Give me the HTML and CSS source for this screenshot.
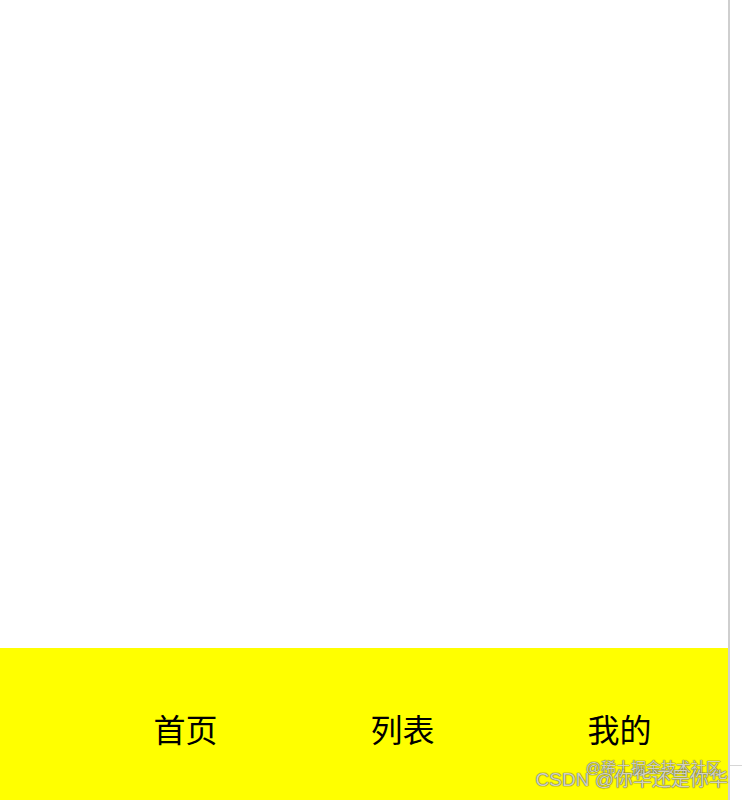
FILE: index.html
```html
<!DOCTYPE html>
<html lang="zh-CN">
<head>
    <meta charset="UTF-8">
    <meta name="viewport" content="width=device-width, initial-scale=1.0">
    <title>TabBar</title>
    <link rel="stylesheet" href="styles.css">
</head>
<body>

    <div class="screen">
        <div class="phone">
            <div class="content"></div>
            <div class="tabbar">
                <div class="tab">首页</div>
                <div class="tab">列表</div>
                <div class="tab">我的</div>
            </div>
        </div>
        <div class="side">
            <div class="side-line"></div>
        </div>

        <div class="watermark">
            <span class="mark-top">@稀土掘金技术社区</span>
            <span class="mark-bottom">CSDN @你华还是你华</span>
        </div>
    </div>

</body>
</html>
```

FILE: styles.css
```css
html, body {
    margin: 0;
    padding: 0;
    background-color: #fff;
}
body {
    font-family: "Noto Sans CJK SC", "Noto Sans", sans-serif;
}
.screen {
    position: relative;
    display: flex;
    width: 742px;
    height: 800px;
    overflow: hidden;
}
.phone {
    display: flex;
    flex-direction: column;
    width: 728px;
    height: 800px;
    border-right: 2px solid #cfcfcf;
}
.content {
    height: 648px;
    background-color: #fff;
}
.tabbar {
    flex: 1;
    display: flex;
    justify-content: flex-end;
    background-color: #ffff00;
    padding-top: 64px;
    box-sizing: border-box;
}
.tab {
    width: 217px;
    text-align: center;
    font-size: 32px;
    line-height: 32px;
    color: #000;
}
.side {
    flex: 1;
}
.side-line {
    margin-top: 765px;
    border-top: 1px solid #d6d6d6;
}
.watermark {
    position: absolute;
    right: 14px;
    bottom: 9px;
    display: flex;
    flex-direction: column;
    align-items: flex-end;
    font-family: "Liberation Sans", "Noto Sans CJK SC", sans-serif;
    color: rgba(255, 255, 255, 0.7);
    text-shadow: 0 0 1px #6e6e40, 0 0 1px #6e6e40, 0 0 1px #6e6e40;
}
.mark-top {
    font-size: 15px;
    line-height: 15px;
    margin-right: 7px;
    margin-bottom: -6px;
}
.mark-bottom {
    font-size: 19px;
    line-height: 22px;
}
```
